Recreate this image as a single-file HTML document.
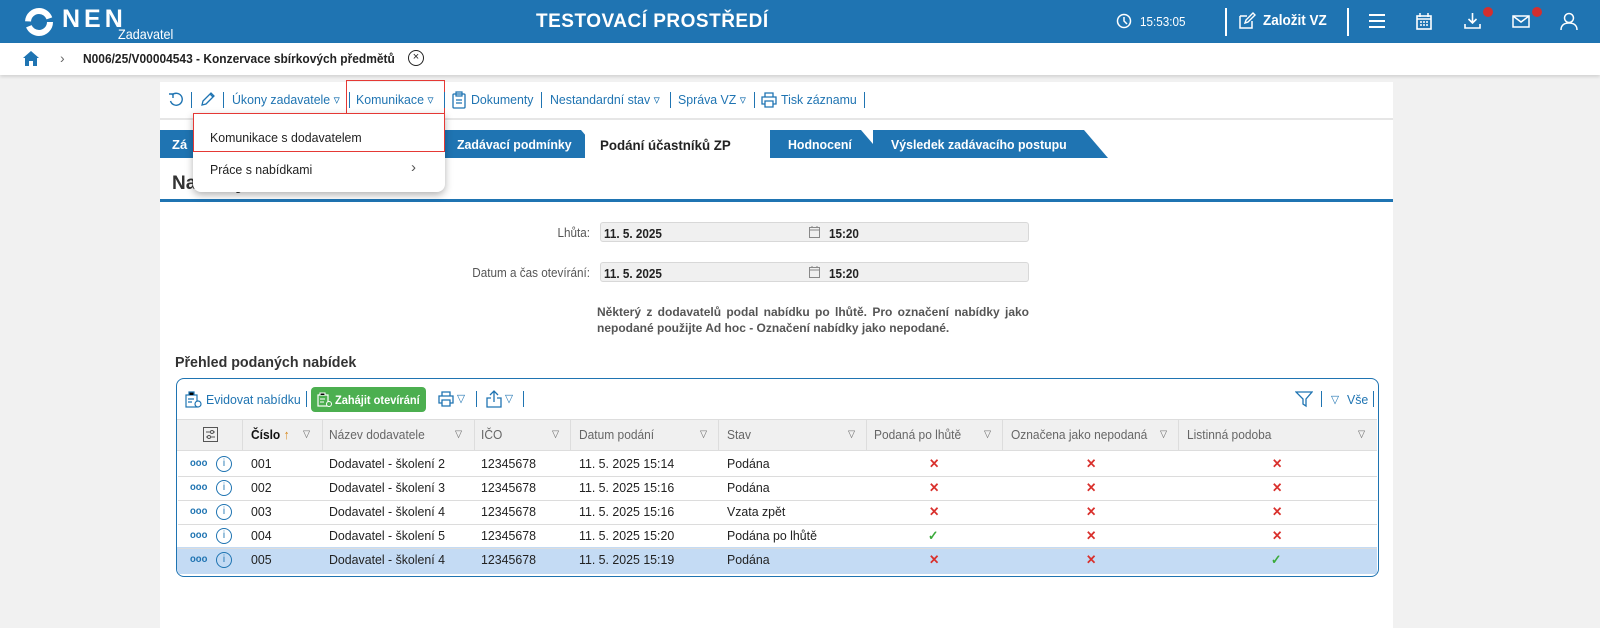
<!DOCTYPE html>
<html><head><meta charset="utf-8">
<style>
*{box-sizing:border-box;margin:0;padding:0}
body{width:1600px;height:628px;overflow:hidden;background:#f1f1f1;font-family:"Liberation Sans",sans-serif;position:relative;color:#222}
.a{position:absolute}
.n{transform:scaleX(.9);transform-origin:left center;white-space:nowrap}
.hdr{left:0;top:0;width:1600px;height:43px;background:#1f74b2}
.w{color:#fff}
.tb{color:#1f74b2;font-size:13px;white-space:nowrap;transform:scaleX(.95);transform-origin:left center}
.sep{width:1px;height:16px;background:#1f74b2}
.tab{height:28px;background:#1f74b2;color:#fff;font-weight:bold;font-size:13px;line-height:30px;padding-left:12px;clip-path:polygon(0 0,calc(100% - 24px) 0,100% 100%,0 100%);white-space:nowrap}
.cell{font-size:13px;line-height:24px;white-space:nowrap;transform:scaleX(.95);transform-origin:left center}
.hc{font-size:13px;color:#666;line-height:30px;white-space:nowrap;transform:scaleX(.92);transform-origin:left center}
.x{color:#d9302c;font-weight:bold;font-size:13px}
.ok{color:#3aaa3a;font-weight:bold;font-size:13px}
.rl{height:1px;background:#dcdcdc}
</style></head><body>
<div class="a hdr"></div>
<svg class="a" style="left:24px;top:7px" width="30" height="30" viewBox="0 0 30 30"><circle cx="15" cy="15" r="11" fill="none" stroke="#fff" stroke-width="6" stroke-dasharray="30 5"/></svg>
<div class="a w" style="left:62px;top:5px;font-size:25px;font-weight:bold;letter-spacing:4px">NEN</div>
<div class="a w n" style="left:118px;top:26px;font-size:14px">Zadavatel</div>
<div class="a w" style="left:536px;top:11px;font-size:19px;font-weight:bold;letter-spacing:.5px">TESTOVACÍ PROSTŘEDÍ</div>
<svg class="a" style="left:1116px;top:13px" width="16" height="16"><circle cx="8" cy="8" r="6.5" fill="none" stroke="#fff" stroke-width="1.5"/><path d="M8 4v4l3 3" stroke="#fff" stroke-width="1.5" fill="none"/></svg>
<div class="a w n" style="left:1140px;top:14px;font-size:13px">15:53:05</div>
<div class="a" style="left:1225px;top:8px;width:2px;height:28px;background:#fff"></div>
<svg class="a" style="left:1238px;top:12px" width="18" height="18"><path d="M2 4h7M2 4v12h12V9" stroke="#fff" stroke-width="1.5" fill="none"/><path d="M7 11l1-3 7-7 2 2-7 7z" stroke="#fff" stroke-width="1.4" fill="none"/></svg>
<div class="a w n" style="left:1263px;top:12px;font-size:15px;font-weight:bold">Založit VZ</div>
<div class="a" style="left:1347px;top:8px;width:2px;height:28px;background:#fff"></div>
<svg class="a" style="left:1369px;top:14px" width="16" height="14"><path d="M0 1h16M0 7h16M0 13h16" stroke="#fff" stroke-width="2"/></svg>
<svg class="a" style="left:1416px;top:13px" width="16" height="17"><rect x="1" y="3" width="14" height="13" fill="none" stroke="#fff" stroke-width="1.6"/><path d="M1 6h14M4 0v4M12 0v4M4 9h2M7 9h2M10 9h2M4 12h2M7 12h2M10 12h2" stroke="#fff" stroke-width="1.5"/></svg>
<svg class="a" style="left:1464px;top:12px" width="17" height="18"><path d="M8.5 1v10M4.5 7l4 4 4-4M1 12v4h15v-4" stroke="#fff" stroke-width="1.6" fill="none"/></svg>
<div class="a" style="left:1483px;top:7px;width:10px;height:10px;border-radius:50%;background:#d32f2f"></div>
<svg class="a" style="left:1512px;top:15px" width="18" height="13"><rect x="1" y="1" width="16" height="11" fill="none" stroke="#fff" stroke-width="1.5"/><path d="M1 1l8 6 8-6" stroke="#fff" stroke-width="1.5" fill="none"/></svg>
<div class="a" style="left:1532px;top:7px;width:10px;height:10px;border-radius:50%;background:#d32f2f"></div>
<svg class="a" style="left:1560px;top:12px" width="18" height="18"><circle cx="9" cy="6" r="4.5" fill="none" stroke="#fff" stroke-width="1.5"/><path d="M1 18c0-5 3.5-7 8-7s8 2 8 7" stroke="#fff" stroke-width="1.5" fill="none"/></svg>

<div class="a" style="left:0;top:43px;width:1600px;height:32px;background:#fff;box-shadow:0 2px 3px rgba(0,0,0,.12)"></div>
<svg class="a" style="left:22px;top:50px" width="18" height="17"><path d="M9 1L1 8h2v8h4v-5h4v5h4V8h2z" fill="#1f74b2"/></svg>
<div class="a" style="left:60px;top:50px;font-size:14px;color:#666">&#x203A;</div>
<div class="a n" style="left:83px;top:51px;font-size:13px;font-weight:bold;transform:scaleX(.92)">N006/25/V00004543 - Konzervace sbírkových předmětů</div>
<div class="a" style="left:408px;top:50px;width:16px;height:16px;border:1.5px solid #222;border-radius:50%;font-size:11px;text-align:center;line-height:12px">×</div>

<div class="a" style="left:160px;top:82px;width:1233px;height:546px;background:#fff"></div>
<div class="a" style="left:160px;top:118px;width:1233px;height:2px;background:#e6e6e6"></div>
<svg class="a" style="left:168px;top:91px" width="17" height="17"><path d="M4 4a6 6 0 1 1-1.5 6" stroke="#1f74b2" stroke-width="1.4" fill="none"/><path d="M1 3h4v4" stroke="#1f74b2" stroke-width="1.4" fill="none"/></svg>
<div class="a sep" style="left:191px;top:92px"></div>
<svg class="a" style="left:200px;top:91px" width="16" height="16"><path d="M2 14l1-4 8-8 3 3-8 8zM10 3l3 3" stroke="#1f74b2" stroke-width="1.3" fill="none"/></svg>
<div class="a sep" style="left:223px;top:92px"></div>
<div class="a tb" style="left:232px;top:92px">Úkony zadavatele ▿</div>
<div class="a sep" style="left:349px;top:92px"></div>
<div class="a tb" style="left:356px;top:92px">Komunikace ▿</div>
<div class="a" style="left:346px;top:80px;width:99px;height:35px;border:1px solid #e53935"></div>
<div class="a sep" style="left:444px;top:92px"></div>
<svg class="a" style="left:452px;top:91px" width="14" height="18"><rect x="1" y="3" width="12" height="14" rx="1" fill="none" stroke="#1f74b2" stroke-width="1.3"/><path d="M4 1h6v4H4zM4 9h6M4 12h6" stroke="#1f74b2" stroke-width="1.2" fill="none"/></svg>
<div class="a tb" style="left:471px;top:92px">Dokumenty</div>
<div class="a sep" style="left:541px;top:92px"></div>
<div class="a tb" style="left:550px;top:92px">Nestandardní stav ▿</div>
<div class="a sep" style="left:670px;top:92px"></div>
<div class="a tb" style="left:678px;top:92px">Správa VZ ▿</div>
<div class="a sep" style="left:754px;top:92px"></div>
<svg class="a" style="left:761px;top:92px" width="16" height="16"><path d="M4 5V1h8v4M4 12H1V5h14v7h-3M4 9h8v6H4z" stroke="#1f74b2" stroke-width="1.3" fill="none"/></svg>
<div class="a tb" style="left:781px;top:92px">Tisk záznamu</div>
<div class="a sep" style="left:864px;top:92px"></div>

<div class="a tab" style="left:160px;top:130px;width:60px">Zá</div>
<div class="a tab" style="left:430px;top:130px;width:175px;padding-left:27px"><span style="display:inline-block;transform:scaleX(.95);transform-origin:left">Zadávací podmínky</span></div>
<div class="a" style="left:585px;top:130px;width:190px;height:30px;background:#fff;clip-path:polygon(0 0,170px 0,190px 30px,0 30px);font-weight:bold;font-size:14px;line-height:30px;padding-left:15px;white-space:nowrap"><span style="display:inline-block;transform:scaleX(.95);transform-origin:left">Podání účastníků ZP</span></div>
<div class="a tab" style="left:770px;top:130px;width:115px;padding-left:18px"><span style="display:inline-block;transform:scaleX(.95);transform-origin:left">Hodnocení</span></div>
<div class="a tab" style="left:873px;top:130px;width:235px;padding-left:18px"><span style="display:inline-block;transform:scaleX(.95);transform-origin:left">Výsledek zadávacího postupu</span></div>
<div class="a" style="left:172px;top:173px;font-size:19px;font-weight:bold;color:#333">Nabídky</div>
<div class="a" style="left:160px;top:199px;width:1233px;height:3px;background:#1f74b2"></div>

<div class="a" style="left:193px;top:113px;width:252px;height:79px;background:#fff;border-radius:0 0 8px 8px;box-shadow:0 3px 8px rgba(0,0,0,.3)"></div>
<div class="a" style="left:193px;top:113px;width:252px;height:39px;border:1px solid #e53935"></div>
<div class="a n" style="left:210px;top:130px;font-size:13px;transform:scaleX(.95)">Komunikace s dodavatelem</div>
<div class="a n" style="left:210px;top:162px;font-size:13px;transform:scaleX(.95)">Práce s nabídkami</div>
<div class="a" style="left:411px;top:159px;font-size:15px;color:#555">›</div>

<div class="a" style="left:390px;top:225px;width:200px;text-align:right;font-size:13px;color:#555;transform:scaleX(.9);transform-origin:right">Lhůta:</div>
<div class="a" style="left:390px;top:265px;width:200px;text-align:right;font-size:13px;color:#555;transform:scaleX(.9);transform-origin:right">Datum a čas otevírání:</div>
<div class="a" style="left:600px;top:222px;width:429px;height:20px;background:#f0f0f0;border:1px solid #d8d8d8;border-radius:3px"></div>
<div class="a" style="left:600px;top:262px;width:429px;height:20px;background:#f0f0f0;border:1px solid #d8d8d8;border-radius:3px"></div>
<div class="a n" style="left:604px;top:226px;font-size:13px;font-weight:bold">11. 5. 2025</div>
<div class="a n" style="left:604px;top:266px;font-size:13px;font-weight:bold">11. 5. 2025</div>
<div class="a n" style="left:829px;top:226px;font-size:13px;font-weight:bold">15:20</div>
<div class="a n" style="left:829px;top:266px;font-size:13px;font-weight:bold">15:20</div>
<svg class="a" style="left:809px;top:226px" width="11" height="12"><rect x=".5" y="1.5" width="10" height="10" fill="none" stroke="#888"/><path d="M.5 4h10M3 0v2M8 0v2" stroke="#888"/></svg>
<svg class="a" style="left:809px;top:266px" width="11" height="12"><rect x=".5" y="1.5" width="10" height="10" fill="none" stroke="#888"/><path d="M.5 4h10M3 0v2M8 0v2" stroke="#888"/></svg>
<div class="a" style="left:597px;top:304px;width:432px;font-size:12px;font-weight:bold;color:#555;line-height:16px;text-align:justify;text-align-last:left">Některý z dodavatelů podal nabídku po lhůtě. Pro označení nabídky jako nepodané použijte Ad hoc - Označení nabídky jako nepodané.</div>

<div class="a n" style="left:175px;top:354px;font-size:15px;font-weight:bold;color:#333;transform:scaleX(.95)">Přehled podaných nabídek</div>
<div class="a" style="left:176px;top:378px;width:1203px;height:199px;border:1.5px solid #1f74b2;border-radius:8px;overflow:hidden">
 <div class="a" style="left:0;top:40px;width:1200px;height:32px;background:#f0f0f0;border-top:1px solid #ddd;border-bottom:1px solid #ddd"></div>
 <div class="a" style="left:0;top:168px;width:1200px;height:27px;background:#c4dbf4"></div>
</div>
<svg class="a" style="left:185px;top:391px" width="17" height="17"><rect x="1" y="4" width="11" height="12" fill="none" stroke="#1f74b2" stroke-width="1.2"/><path d="M4 4V1h5v3M3 8h6M3 11h4" stroke="#1f74b2" stroke-width="1.2"/><circle cx="13" cy="13" r="3" fill="#fff" stroke="#1f74b2" stroke-width="1.2"/></svg>
<div class="a tb" style="left:206px;top:392px">Evidovat nabídku</div>
<div class="a sep" style="left:306px;top:391px"></div>
<div class="a" style="left:311px;top:387px;width:115px;height:25px;background:#4caf50;border-radius:4px"></div>
<div class="a n" style="left:335px;top:393px;color:#fff;font-size:12px;font-weight:bold;transform:scaleX(.92)">Zahájit otevírání</div>
<svg class="a" style="left:317px;top:392px" width="15" height="15"><rect x="1" y="3" width="10" height="11" fill="none" stroke="#fff" stroke-width="1.2"/><path d="M3 3V1h5v2M3 7h5M3 10h4" stroke="#fff" stroke-width="1.1"/><circle cx="12" cy="12" r="2.5" fill="#4caf50" stroke="#fff"/></svg>
<svg class="a" style="left:438px;top:391px" width="16" height="16"><path d="M4 5V1h8v4M4 12H1V5h14v7h-3M4 9h8v6H4z" stroke="#1f74b2" stroke-width="1.3" fill="none"/></svg>
<div class="a tb" style="left:457px;top:392px;font-size:11px">▽</div>
<div class="a sep" style="left:476px;top:391px"></div>
<svg class="a" style="left:486px;top:390px" width="16" height="18"><path d="M8 12V1M4 5l4-4 4 4M5 8H1v9h14V8h-4" stroke="#1f74b2" stroke-width="1.3" fill="none"/></svg>
<div class="a tb" style="left:505px;top:392px;font-size:11px">▽</div>
<div class="a sep" style="left:523px;top:391px"></div>
<svg class="a" style="left:1295px;top:390px" width="18" height="18"><path d="M1 2h16l-6 7v7l-3-2V9z" stroke="#1f74b2" stroke-width="1.3" fill="none"/></svg>
<div class="a sep" style="left:1321px;top:391px"></div>
<div class="a tb" style="left:1331px;top:393px;font-size:11px">▽</div>
<div class="a tb" style="left:1347px;top:392px">Vše</div>
<div class="a sep" style="left:1373px;top:391px"></div>

<svg class="a" style="left:203px;top:427px" width="15" height="15"><rect x=".5" y=".5" width="14" height="14" fill="none" stroke="#555"/><path d="M3 5h9M3 10h9" stroke="#555"/><circle cx="9" cy="5" r="1.5" fill="#fff" stroke="#555"/><circle cx="6" cy="10" r="1.5" fill="#fff" stroke="#555"/></svg>
<div class="a" style="left:242px;top:420px;width:1px;height:30px;background:#ddd"></div>
<div class="a hc" style="left:251px;top:420px;color:#111;font-weight:bold">Číslo <span style="color:#d88a1f;font-weight:bold">↑</span></div>
<div class="a hc" style="left:303px;top:420px;font-size:10px">▽</div>
<div class="a" style="left:322px;top:420px;width:1px;height:30px;background:#ddd"></div>
<div class="a hc" style="left:329px;top:420px">Název dodavatele</div><div class="a hc" style="left:455px;top:420px;font-size:10px">▽</div>
<div class="a" style="left:474px;top:420px;width:1px;height:30px;background:#ddd"></div>
<div class="a hc" style="left:481px;top:420px">IČO</div><div class="a hc" style="left:552px;top:420px;font-size:10px">▽</div>
<div class="a" style="left:570px;top:420px;width:1px;height:30px;background:#ddd"></div>
<div class="a hc" style="left:579px;top:420px">Datum podání</div><div class="a hc" style="left:700px;top:420px;font-size:10px">▽</div>
<div class="a" style="left:718px;top:420px;width:1px;height:30px;background:#ddd"></div>
<div class="a hc" style="left:727px;top:420px">Stav</div><div class="a hc" style="left:848px;top:420px;font-size:10px">▽</div>
<div class="a" style="left:866px;top:420px;width:1px;height:30px;background:#ddd"></div>
<div class="a hc" style="left:874px;top:420px">Podaná po lhůtě</div><div class="a hc" style="left:984px;top:420px;font-size:10px">▽</div>
<div class="a" style="left:1002px;top:420px;width:1px;height:30px;background:#ddd"></div>
<div class="a hc" style="left:1011px;top:420px">Označena jako nepodaná</div><div class="a hc" style="left:1160px;top:420px;font-size:10px">▽</div>
<div class="a" style="left:1178px;top:420px;width:1px;height:30px;background:#ddd"></div>
<div class="a hc" style="left:1187px;top:420px">Listinná podoba</div><div class="a hc" style="left:1358px;top:420px;font-size:10px">▽</div>

<div class="a rl" style="left:178px;top:476px;width:1199px"></div>
<div class="a rl" style="left:178px;top:500px;width:1199px"></div>
<div class="a rl" style="left:178px;top:524px;width:1199px"></div>
<div class="a rl" style="left:178px;top:548px;width:1199px"></div>

<div class="a" style="left:0;top:452px">
<div class="a cell" style="left:190px;top:0;color:#1f74b2;font-size:10px;font-weight:bold">ooo</div>
<div class="a" style="left:216px;top:4px;width:16px;height:16px;border:1.3px solid #1f74b2;border-radius:50%;color:#1f74b2;font-size:10px;text-align:center;line-height:14px">i</div>
<div class="a cell" style="left:251px">001</div><div class="a cell" style="left:329px">Dodavatel - školení 2</div><div class="a cell" style="left:481px">12345678</div><div class="a cell" style="left:579px">11. 5. 2025 15:14</div><div class="a cell" style="left:727px">Podána</div>
<div class="a cell x" style="left:929px">✕</div><div class="a cell x" style="left:1086px">✕</div><div class="a cell x" style="left:1272px">✕</div></div>

<div class="a" style="left:0;top:476px">
<div class="a cell" style="left:190px;top:0;color:#1f74b2;font-size:10px;font-weight:bold">ooo</div>
<div class="a" style="left:216px;top:4px;width:16px;height:16px;border:1.3px solid #1f74b2;border-radius:50%;color:#1f74b2;font-size:10px;text-align:center;line-height:14px">i</div>
<div class="a cell" style="left:251px">002</div><div class="a cell" style="left:329px">Dodavatel - školení 3</div><div class="a cell" style="left:481px">12345678</div><div class="a cell" style="left:579px">11. 5. 2025 15:16</div><div class="a cell" style="left:727px">Podána</div>
<div class="a cell x" style="left:929px">✕</div><div class="a cell x" style="left:1086px">✕</div><div class="a cell x" style="left:1272px">✕</div></div>

<div class="a" style="left:0;top:500px">
<div class="a cell" style="left:190px;top:0;color:#1f74b2;font-size:10px;font-weight:bold">ooo</div>
<div class="a" style="left:216px;top:4px;width:16px;height:16px;border:1.3px solid #1f74b2;border-radius:50%;color:#1f74b2;font-size:10px;text-align:center;line-height:14px">i</div>
<div class="a cell" style="left:251px">003</div><div class="a cell" style="left:329px">Dodavatel - školení 4</div><div class="a cell" style="left:481px">12345678</div><div class="a cell" style="left:579px">11. 5. 2025 15:16</div><div class="a cell" style="left:727px">Vzata zpět</div>
<div class="a cell x" style="left:929px">✕</div><div class="a cell x" style="left:1086px">✕</div><div class="a cell x" style="left:1272px">✕</div></div>

<div class="a" style="left:0;top:524px">
<div class="a cell" style="left:190px;top:0;color:#1f74b2;font-size:10px;font-weight:bold">ooo</div>
<div class="a" style="left:216px;top:4px;width:16px;height:16px;border:1.3px solid #1f74b2;border-radius:50%;color:#1f74b2;font-size:10px;text-align:center;line-height:14px">i</div>
<div class="a cell" style="left:251px">004</div><div class="a cell" style="left:329px">Dodavatel - školení 5</div><div class="a cell" style="left:481px">12345678</div><div class="a cell" style="left:579px">11. 5. 2025 15:20</div><div class="a cell" style="left:727px">Podána po lhůtě</div>
<div class="a cell ok" style="left:928px">✓</div><div class="a cell x" style="left:1086px">✕</div><div class="a cell x" style="left:1272px">✕</div></div>

<div class="a" style="left:0;top:548px">
<div class="a cell" style="left:190px;top:0;color:#1f74b2;font-size:10px;font-weight:bold">ooo</div>
<div class="a" style="left:216px;top:4px;width:16px;height:16px;border:1.3px solid #1f74b2;border-radius:50%;color:#1f74b2;font-size:10px;text-align:center;line-height:14px">i</div>
<div class="a cell" style="left:251px">005</div><div class="a cell" style="left:329px">Dodavatel - školení 4</div><div class="a cell" style="left:481px">12345678</div><div class="a cell" style="left:579px">11. 5. 2025 15:19</div><div class="a cell" style="left:727px">Podána</div>
<div class="a cell x" style="left:929px">✕</div><div class="a cell x" style="left:1086px">✕</div><div class="a cell ok" style="left:1271px">✓</div></div>
</body></html>
